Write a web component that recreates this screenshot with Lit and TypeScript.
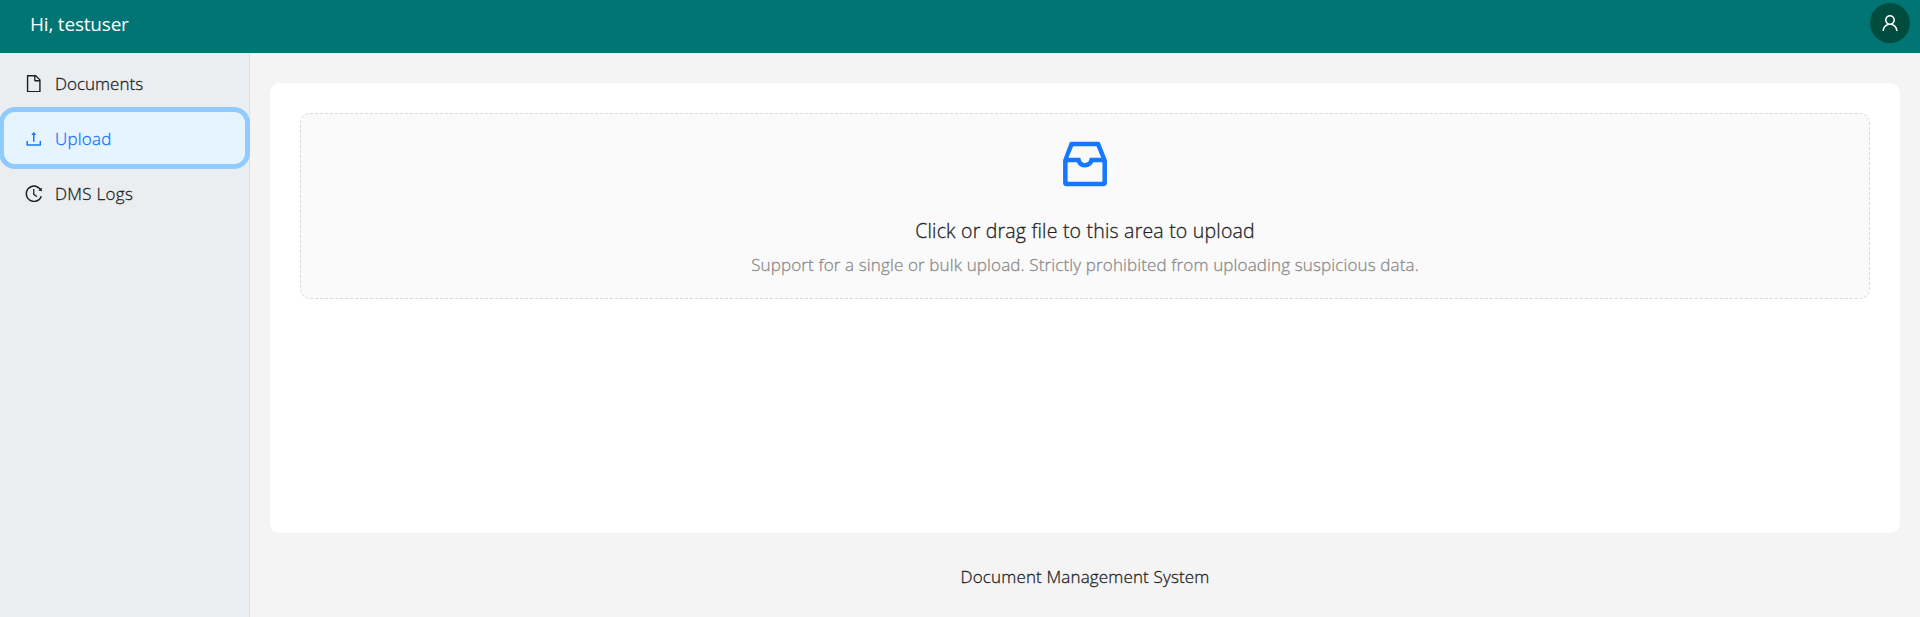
import { LitElement, html, css, svg } from "lit";

const icons: Record<string, string> = {
  user: "M858.5 763.6a374 374 0 0 0-80.6-119.5 375.63 375.63 0 0 0-119.5-80.6c-.4-.2-.8-.3-1.2-.5C719.5 518 760 444.7 760 362c0-137-111-248-248-248S264 225 264 362c0 82.7 40.5 156 102.8 201.1-.4.2-.8.3-1.2.5-44.8 18.9-85 46-119.5 80.6a375.63 375.63 0 0 0-80.6 119.5A371.7 371.7 0 0 0 136 901.8a8 8 0 0 0 8 8.2h60c4.4 0 7.9-3.5 8-7.8 2-77.2 33-149.5 87.8-204.3 56.7-56.7 132-87.9 212.2-87.9s155.5 31.2 212.2 87.9C779 752.7 810 825 812 902.2c.1 4.4 3.6 7.8 8 7.8h60a8 8 0 0 0 8-8.2c-1-47.8-10.9-94.3-29.5-138.2zM512 534c-45.9 0-89.1-17.9-121.6-50.4S340 407.9 340 362c0-45.9 17.9-89.1 50.4-121.6S466.1 190 512 190s89.1 17.9 121.6 50.4S684 316.1 684 362c0 45.9-17.9 89.1-50.4 121.6S557.9 534 512 534z",
  file: "M854.6 288.6L639.4 73.4c-6-6-14.1-9.4-22.6-9.4H192c-17.7 0-32 14.3-32 32v832c0 17.7 14.3 32 32 32h640c17.7 0 32-14.3 32-32V311.3c0-8.5-3.4-16.7-9.4-22.7zM790.2 326H602V137.8L790.2 326zm1.8 562H232V136h302v216a42 42 0 0 0 42 42h216v494z",
  upload: "M400 317.7h73.9V656c0 4.4 3.6 8 8 8h60c4.4 0 8-3.6 8-8V317.7H624c6.7 0 10.4-7.7 6.3-12.9L518.3 163a8 8 0 0 0-12.6 0l-112 141.7c-4.1 5.3-.4 13 6.3 13zM878 626h-60c-4.4 0-8 3.6-8 8v154H214V634c0-4.4-3.6-8-8-8h-60c-4.4 0-8 3.6-8 8v198c0 17.7 14.3 32 32 32h684c17.7 0 32-14.3 32-32V634c0-4.4-3.6-8-8-8z",
  history: "M536.1 273H488c-4.4 0-8 3.6-8 8v275.3c0 2.6 1.2 5 3.3 6.5l165.3 120.7c3.6 2.6 8.6 1.9 11.2-1.7l28.6-39c2.7-3.7 1.9-8.7-1.7-11.2L544.1 528.5V281c0-4.4-3.6-8-8-8zm219.8 75.2l156.8 38.3c5 1.2 9.9-2.6 9.9-7.7l.8-161.5c0-6.7-7.7-10.5-12.9-6.3L752.9 334.1a8 8 0 0 0 3 14.1zm167.7 301.1l-56.7-19.5a8 8 0 0 0-10.1 4.8c-1.9 5.1-3.9 10.1-6 15.1-17.8 42.1-43.3 80-75.9 112.5a353 353 0 0 1-112.5 75.9 352.18 352.18 0 0 1-137.7 27.8c-47.8 0-94.1-9.3-137.7-27.8a353 353 0 0 1-112.5-75.9c-32.5-32.5-58-70.4-75.9-112.5A353.44 353.44 0 0 1 171 512c0-47.8 9.3-94.2 27.8-137.8 17.8-42.1 43.3-80 75.9-112.5a353 353 0 0 1 112.5-75.9C430.6 167.3 477 158 524.8 158s94.1 9.3 137.7 27.8A353 353 0 0 1 775 261.7c10.2 10.3 19.8 21 28.6 32.3l59.8-46.8C784.7 146.6 662.2 81.9 524.6 82 285 82.1 92.6 276.7 95 516.4 97.4 751.9 288.9 942 524.8 942c185.5 0 343.5-117.6 403.7-282.3 1.5-4.2-.7-8.9-4.9-10.4z",
  inbox: "M885.2 446.3l-.2-.8-112.2-285.1c-5-16.1-19.9-27.2-36.8-27.2H281.2c-17 0-32.1 11.3-36.9 27.6L139.4 443l-.3.7-.2.8c-1.3 4.9-1.7 9.9-1 14.8-.1 1.6-.2 3.2-.2 4.8V830a60.9 60.9 0 0 0 60.8 60.8h627.2c33.5 0 60.8-27.3 60.9-60.8V464.1c0-1.3 0-2.6-.1-3.7.4-4.9 0-9.6-1.3-14.1zm-295.8-43l-.3 15.7c-.8 44.9-31.8 75.1-77.1 75.1-22.1 0-41.1-7.1-54.8-20.6S436 441.2 435.6 419l-.3-15.7H229.5L309 210h399.2l81.7 193.3H589.4zm-375 76.8h157.3c24.3 57.1 76 90.8 140.4 90.8 33.7 0 65-9.4 90.3-27.2 22.2-15.6 39.5-37.4 50.7-63.6h156.5V814H214.4V480.1z",
};

const icon = (name: string, viewBox = "64 64 896 896") =>
  html`<svg class="icon ${name}" viewBox=${viewBox} aria-hidden="true">${svg`<path d=${icons[name]}></path>`}</svg>`;

class AppRoot extends LitElement {
  static styles = css`
    :host {
      display: flex;
      flex-direction: column;
      height: 617px;
      overflow: hidden;
      background: #f4f4f4;
      color: #1f1f1f;
      font: 300 17px/27.5px "Open Sans", "Noto Sans", sans-serif;
      -webkit-text-stroke: 0.3px currentColor;
    }
    * { box-sizing: border-box; }
    .icon { display: block; fill: currentColor; width: 17.5px; height: 17.5px; flex: none; }
    header {
      flex: none;
      height: 53px;
      padding: 0 10px 7px 30px;
      background: #007573;
      color: #fff;
      display: flex;
      align-items: center;
      justify-content: space-between;
    }
    .greeting {
      font-size: 19px;
      font-weight: 400;
      letter-spacing: -0.2px;
      padding-top: 3px;
      -webkit-text-stroke: 0;
    }
    .avatar {
      width: 40px;
      height: 40px;
      border-radius: 50%;
      background: #004d40;
      display: grid;
      place-items: center;
    }
    .avatar .icon { width: 18px; height: 18px; }
    .body { flex: 1; display: flex; min-height: 0; }
    nav {
      flex: none;
      width: 250px;
      padding: 5px 5px 0 5px;
      background: #eaeef1;
      border-right: 1px solid #dcdfe2;
      display: flex;
      flex-direction: column;
      gap: 5px;
    }
    .item {
      height: 50px;
      padding: 1px 0 0 20px;
      border-radius: 10px;
      display: flex;
      align-items: center;
      gap: 12.5px;
    }
    .logs { letter-spacing: 0.3px; }
    .selected {
      position: relative;
      letter-spacing: 0.2px;
      background: #e6f4ff;
      color: #1677ff;
      box-shadow: 0 0 0 1px #e6f4ff, 0 0 0 6px #91caff;
    }
    main { flex: 1; padding: 30px 20px 0; display: flex; flex-direction: column; }
    .card { height: 450px; padding: 30px; background: #fff; border-radius: 10px; }
    .dragger {
      height: 186px;
      padding-top: 20px;
      border: 1px dashed #d9d9d9;
      border-radius: 10px;
      background: #fafafa;
      display: flex;
      flex-direction: column;
      align-items: center;
    }
    .dragger .inbox { width: 60px; height: 60px; color: #1677ff; }
    .title { margin: 22px 0 0; font-size: 19.5px; line-height: 30px; letter-spacing: 0.2px; }
    .hint { margin: 5px 0 0; color: #8c8c8c; letter-spacing: 0.135px; }
    footer { padding-top: 30px; text-align: center; letter-spacing: 0.15px; }
  `;

  render() {
    return html`
      <header>
        <div class="greeting">Hi, testuser</div>
        <div class="avatar">${icon("user")}</div>
      </header>
      <div class="body">
        <nav>
          <div class="item documents">${icon("file")}<span>Documents</span></div>
          <div class="item selected">${icon("upload")}<span>Upload</span></div>
          <div class="item logs">${icon("history")}<span>DMS Logs</span></div>
        </nav>
        <main>
          <div class="card">
            <div class="dragger">
              ${icon("inbox", "0 0 1024 1024")}
              <p class="title">Click or drag file to this area to upload</p>
              <p class="hint">Support for a single or bulk upload. Strictly prohibited from uploading suspicious data.</p>
            </div>
          </div>
          <footer>Document Management System</footer>
        </main>
      </div>
    `;
  }
}
customElements.define("app-root", AppRoot);
